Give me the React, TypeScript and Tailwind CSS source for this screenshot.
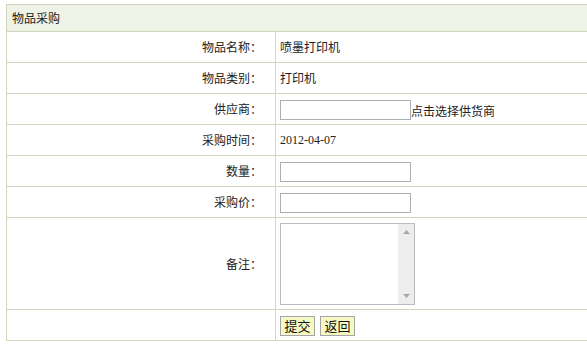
export default function App() {
  const label = 'h-[31px] border border-[#d4d5bc] pr-[13px] text-right align-middle'
  const value = 'h-[31px] border border-[#d4d5bc] pl-[4px] text-left align-middle'
  const input = 'block h-[20px] w-[131px] border border-[#a9afb5] bg-white'

  return (
    <div className="h-[354px] w-[587px] overflow-hidden bg-white pl-[6px] pt-[4px] text-[12px] text-[#222] [font-family:'Noto_Sans_CJK_SC',sans-serif]">
      <table className="w-[640px] border-collapse">
        <tbody>
          <tr>
            <td colSpan={2} className="h-[27px] border border-[#d4d5bc] bg-[#eef3e7] pl-[5px] align-middle">
              物品采购
            </td>
          </tr>
          <tr>
            <td className={`${label} w-[269px]`}>物品名称：</td>
            <td className={value}>喷墨打印机</td>
          </tr>
          <tr>
            <td className={label}>物品类别：</td>
            <td className={value}>打印机</td>
          </tr>
          <tr>
            <td className={label}>供应商：</td>
            <td className={value}>
              <div className="flex items-center">
                <span className={`${input} mt-[2px]`} />
                <span className="mt-[4px]">点击选择供货商</span>
              </div>
            </td>
          </tr>
          <tr>
            <td className={label}>采购时间：</td>
            <td className={`${value} [font-family:'Liberation_Serif',serif]`}>2012-04-07</td>
          </tr>
          <tr>
            <td className={label}>数量：</td>
            <td className={value}>
              <span className={`${input} mt-[2px]`} />
            </td>
          </tr>
          <tr>
            <td className={label}>采购价：</td>
            <td className={value}>
              <span className={`${input} mt-[2px]`} />
            </td>
          </tr>
          <tr>
            <td className={`${label} h-[92px]`}>备注：</td>
            <td className={`${value} h-[92px]`}>
              <div className="flex h-[82px] w-[135px] border border-[#b9bdc1] bg-white">
                <div className="flex-1" />
                <div className="flex w-[16px] flex-col items-center justify-between bg-[#ededed] py-[6px]">
                  <svg width="7" height="4" viewBox="0 0 7 4">
                    <path d="M0 4 L3.5 0 L7 4 Z" fill="#a8a8a8" />
                  </svg>
                  <svg width="7" height="4" viewBox="0 0 7 4">
                    <path d="M0 0 L3.5 4 L7 0 Z" fill="#a8a8a8" />
                  </svg>
                </div>
              </div>
            </td>
          </tr>
          <tr>
            <td className={label}></td>
            <td className={value}>
              <div className="mt-[1px] flex gap-[5px]">
                <button className="h-[20px] w-[35px] border border-[#a5a5a5] bg-[#f7f9c3] text-[13px] leading-none text-[#111]">
                  提交
                </button>
                <button className="h-[20px] w-[35px] border border-[#a5a5a5] bg-[#f7f9c3] text-[13px] leading-none text-[#111]">
                  返回
                </button>
              </div>
            </td>
          </tr>
        </tbody>
      </table>
    </div>
  )
}
